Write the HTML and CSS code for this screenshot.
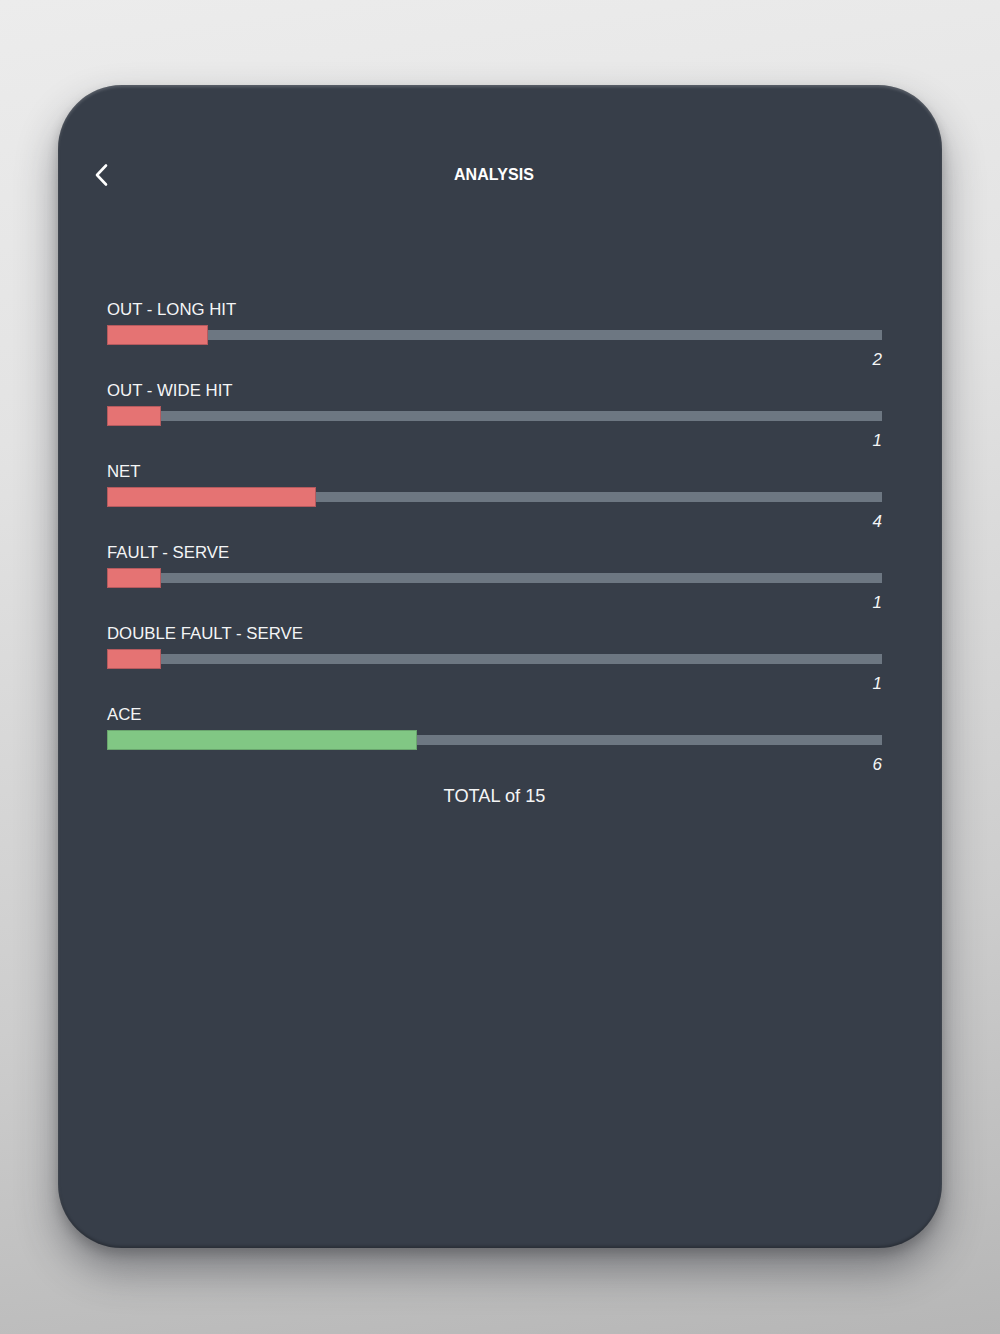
FILE: index.html
```html
<!DOCTYPE html>
<html lang="en">
<head>
<meta charset="utf-8">
<title>Analysis</title>
<link rel="stylesheet" href="styles.css">
</head>
<body>
<div class="device">
  <header class="header">
    <svg class="back" width="16" height="24" viewBox="0 0 16 24" aria-hidden="true">
      <path d="M12 2.5 L3 12 L12 21.5" fill="none" stroke="#ffffff" stroke-width="2.6" stroke-linecap="round" stroke-linejoin="round"/>
    </svg>
    <h1 class="title">ANALYSIS</h1>
    <span></span>
  </header>
  <main class="stats">
    <div class="row">
      <div class="label">OUT - LONG HIT</div>
      <div class="track"><div class="fill red" style="width:13.03%"></div></div>
      <div class="value">2</div>
    </div>
    <div class="row">
      <div class="label">OUT - WIDE HIT</div>
      <div class="track"><div class="fill red" style="width:6.97%"></div></div>
      <div class="value">1</div>
    </div>
    <div class="row">
      <div class="label">NET</div>
      <div class="track"><div class="fill red" style="width:26.97%"></div></div>
      <div class="value">4</div>
    </div>
    <div class="row">
      <div class="label">FAULT - SERVE</div>
      <div class="track"><div class="fill red" style="width:6.97%"></div></div>
      <div class="value">1</div>
    </div>
    <div class="row">
      <div class="label">DOUBLE FAULT - SERVE</div>
      <div class="track"><div class="fill red" style="width:6.97%"></div></div>
      <div class="value">1</div>
    </div>
    <div class="row">
      <div class="label">ACE</div>
      <div class="track"><div class="fill green" style="width:40%"></div></div>
      <div class="value">6</div>
    </div>
    <div class="total">TOTAL of 15</div>
  </main>
</div>
</body>
</html>
```

FILE: styles.css
```css
html, body {
  margin: 0;
  padding: 0;
}

body {
  width: 1000px;
  height: 1334px;
  overflow: hidden;
  background: linear-gradient(172deg, #ececec 0%, #e3e3e3 30%, #cdcdcd 70%, #b6b6b6 100%);
  font-family: "Liberation Sans", Arial, sans-serif;
  padding: 85px 58px 0 58px;
  box-sizing: border-box;
}

.device {
  width: 884px;
  height: 1163px;
  background: #373e49;
  border-radius: 64px;
  box-shadow: 0 22px 40px rgba(40, 42, 50, 0.45), 0 6px 12px rgba(0, 0, 0, 0.2), inset 0 2px 3px rgba(255, 255, 255, 0.18), inset 0 -2px 3px rgba(0, 0, 0, 0.25);
  padding-top: 77px;
  box-sizing: border-box;
}

.header {
  display: grid;
  grid-template-columns: 1fr auto 1fr;
  align-items: center;
  height: 26px;
  padding: 0 48px 0 36px;
}

.back {
  display: block;
}

.title {
  margin: 0;
  color: #ffffff;
  font-size: 16px;
  font-weight: bold;
  letter-spacing: 0.1px;
  line-height: 26px;
}

.stats {
  padding: 112px 60px 0 49px;
  color: #ffffff;
}

.row {
  margin-bottom: 11px;
}

.label {
  font-size: 16.8px;
  line-height: 20px;
  color: #f4f5f6;
}

.track {
  margin-top: 5px;
  height: 20px;
  display: flex;
  align-items: center;
  background: linear-gradient(#6d7782, #6d7782) center / 100% 10px no-repeat;
}

.fill {
  height: 20px;
  box-sizing: border-box;
}

.red {
  background: #e57373;
  border: 1px solid #b55a5e;
}

.green {
  background: #81c784;
  border: 1px solid #6aa56e;
}

.value {
  margin-top: 5px;
  text-align: right;
  font-size: 17px;
  line-height: 20px;
  font-style: italic;
  color: #f4f5f6;
}

.total {
  margin-top: 2px;
  text-align: center;
  font-size: 18.2px;
  line-height: 20px;
  color: #f4f5f6;
}
```
